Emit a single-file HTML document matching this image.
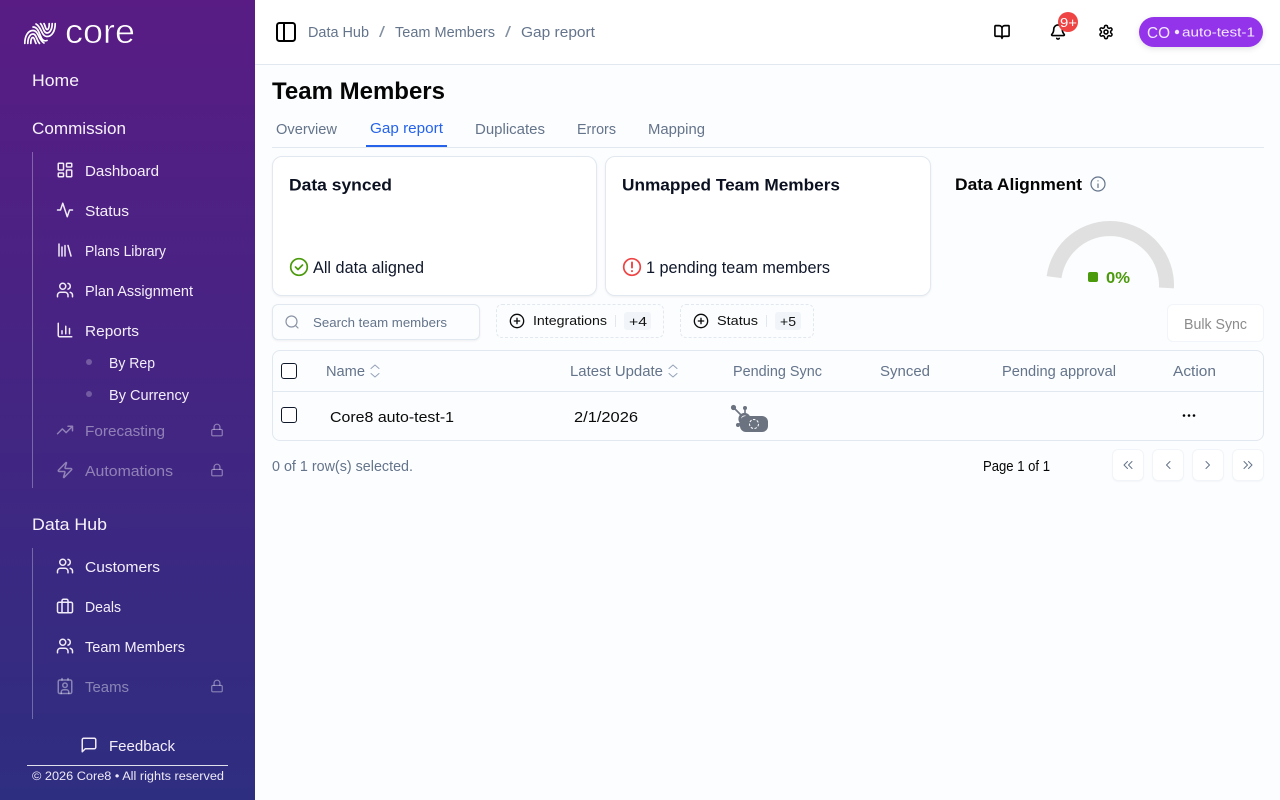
<!DOCTYPE html>
<html lang="en">
<head>
<meta charset="utf-8">
<title>Team Members - Gap report</title>
<style>
html,body{margin:0;padding:0;width:1280px;height:800px;overflow:hidden;background:#fcfdfe;font-family:"Liberation Sans",sans-serif}
.box{position:absolute;box-sizing:border-box}
#side{left:0;top:0;width:255px;height:800px;background:linear-gradient(180deg,#591c85 0%,#2e2e80 100%)}
#head{left:255px;top:0;width:1025px;height:65px;background:#fff;border-bottom:1px solid #e2e8f0}
.card{background:#fff;border:1px solid #e2e8f0;border-radius:10px;box-shadow:0 1px 2px rgba(15,23,42,.06)}
.chip{border:1px dashed #e2e8f0;border-radius:6px}
.badge{background:#f1f5f9;border-radius:3px}
.pg{width:32px;height:32px;top:449px;border:1px solid #f1f5f9;border-radius:6px;background:#fff;box-shadow:0 1px 1px rgba(15,23,42,.03)}
.cb{left:281px;width:16px;height:16px;border:1px solid #0f172a;border-radius:3px;background:#fff}
svg#o{position:absolute;left:0;top:0}
text{font-family:"Liberation Sans",sans-serif}
.i{fill:none;stroke:currentColor;stroke-width:2;stroke-linecap:round;stroke-linejoin:round}
.n{fill:#f4eef9;font-size:14.5px}
.nd{fill:#fff;fill-opacity:.42;font-size:14.5px}
.h{fill:#f7f2fb;font-size:17px}
.g{fill:#64748b;font-size:14.5px}
.t{fill:#0b1120;font-size:17px;font-weight:bold}
</style>
</head>
<body>
<div class="box" id="side"></div>
<div class="box" id="head"></div>
<div class="box card" style="left:272px;top:156px;width:325px;height:140px"></div>
<div class="box card" style="left:605px;top:156px;width:326px;height:140px"></div>
<div class="box" style="left:272px;top:304px;width:208px;height:36px;border:1px solid #e2e8f0;border-radius:6px;background:#fcfdfe;box-shadow:0 1px 2px rgba(15,23,42,.06)"></div>
<div class="box chip" style="left:496px;top:304px;width:168px;height:34px"></div>
<div class="box badge" style="left:624px;top:312px;width:27px;height:18px"></div>
<div class="box" style="left:615px;top:315px;width:1px;height:12px;background:#e2e8f0"></div>
<div class="box chip" style="left:680px;top:304px;width:134px;height:34px"></div>
<div class="box badge" style="left:775px;top:312px;width:26px;height:18px"></div>
<div class="box" style="left:766px;top:315px;width:1px;height:12px;background:#e2e8f0"></div>
<div class="box" style="left:1167px;top:304px;width:97px;height:38px;border:1px solid #f1f5f9;border-radius:6px;background:#fff"></div>
<div class="box" style="left:272px;top:350px;width:992px;height:91px;border:1px solid #e2e8f0;border-radius:8px"></div>
<div class="box" style="left:273px;top:391px;width:990px;height:1px;background:#e2e8f0"></div>
<div class="box cb" style="top:363px"></div>
<div class="box cb" style="top:407px"></div>
<div class="box pg" style="left:1112px"></div>
<div class="box pg" style="left:1152px"></div>
<div class="box pg" style="left:1192px"></div>
<div class="box pg" style="left:1232px"></div>

<svg id="o" width="1280" height="800" viewBox="0 0 1280 800" xmlns="http://www.w3.org/2000/svg">
<defs>
<symbol id="dash" viewBox="0 0 24 24"><rect x="3" y="3" width="7" height="9" rx="1"/><rect x="14" y="3" width="7" height="5" rx="1"/><rect x="14" y="12" width="7" height="9" rx="1"/><rect x="3" y="16" width="7" height="5" rx="1"/></symbol>
<symbol id="act" viewBox="0 0 24 24"><path d="M22 12h-4l-3 9L9 3l-3 9H2"/></symbol>
<symbol id="lib" viewBox="0 0 24 24"><path d="m16 6 4 14M12 6v14M8 8v12M4 4v16"/></symbol>
<symbol id="usr" viewBox="0 0 24 24"><path d="M16 21v-2a4 4 0 0 0-4-4H6a4 4 0 0 0-4 4v2"/><circle cx="9" cy="7" r="4"/><path d="M22 21v-2a4 4 0 0 0-3-3.87M16 3.13a4 4 0 0 1 0 7.75"/></symbol>
<symbol id="bar" viewBox="0 0 24 24"><path d="M3 3v16a2 2 0 0 0 2 2h16M8 17v-4M13 17V7M18 17V10"/></symbol>
<symbol id="trd" viewBox="0 0 24 24"><path d="M22 7l-8.500 8.500-5-5L2 17M16 7h6v6"/></symbol>
<symbol id="zap" viewBox="0 0 24 24"><path d="M4 14a1 1 0 0 1-.78-1.630l9.900-10.200a.5.5 0 0 1 .86.46l-1.920 6.020A1 1 0 0 0 13 10h7a1 1 0 0 1 .78 1.630l-9.900 10.200a.5.5 0 0 1-.86-.46l1.920-6.020A1 1 0 0 0 11 14z"/></symbol>
<symbol id="lck" viewBox="0 0 24 24"><rect x="3" y="11" width="18" height="11" rx="2"/><path d="M7 11V7a5 5 0 0 1 10 0v4"/></symbol>
<symbol id="bag" viewBox="0 0 24 24"><rect x="2" y="7" width="20" height="14" rx="2"/><path d="M16 21V5a2 2 0 0 0-2-2h-4a2 2 0 0 0-2 2v16"/></symbol>
<symbol id="ctc" viewBox="0 0 24 24"><path d="M16 2v2M8 2v2"/><rect x="3" y="4" width="18" height="18" rx="2"/><circle cx="12" cy="11" r="3"/><path d="M7 22v-2a3 3 0 0 1 3-3h4a3 3 0 0 1 3 3v2"/></symbol>
<symbol id="msg" viewBox="0 0 24 24"><path d="M21 15a2 2 0 0 1-2 2H7l-4 4V5a2 2 0 0 1 2-2h14a2 2 0 0 1 2 2z"/></symbol>
<symbol id="book" viewBox="0 0 24 24"><path d="M12 7v14M3 18a1 1 0 0 1-1-1V4a1 1 0 0 1 1-1h5a4 4 0 0 1 4 4 4 4 0 0 1 4-4h5a1 1 0 0 1 1 1v13a1 1 0 0 1-1 1h-6a3 3 0 0 0-3 3 3 3 0 0 0-3-3z"/></symbol>
<symbol id="bell" viewBox="0 0 24 24"><path d="M10.268 21a2 2 0 0 0 3.464 0M3.262 15.326A1 1 0 0 0 4 17h16a1 1 0 0 0 .74-1.673C19.410 13.956 18 12.499 18 8A6 6 0 0 0 6 8c0 4.499-1.411 5.956-2.738 7.326"/></symbol>
<symbol id="gear" viewBox="0 0 24 24"><path d="M12.220 2h-.44a2 2 0 0 0-2 2v.18a2 2 0 0 1-1 1.730l-.43.25a2 2 0 0 1-2 0l-.15-.08a2 2 0 0 0-2.730.73l-.22.38a2 2 0 0 0 .73 2.730l.15.1a2 2 0 0 1 1 1.720v.51a2 2 0 0 1-1 1.740l-.15.09a2 2 0 0 0-.73 2.730l.22.38a2 2 0 0 0 2.730.73l.15-.08a2 2 0 0 1 2 0l.43.25a2 2 0 0 1 1 1.730V20a2 2 0 0 0 2 2h.44a2 2 0 0 0 2-2v-.18a2 2 0 0 1 1-1.730l.43-.25a2 2 0 0 1 2 0l.15.08a2 2 0 0 0 2.730-.73l.22-.39a2 2 0 0 0-.73-2.730l-.15-.08a2 2 0 0 1-1-1.740v-.5a2 2 0 0 1 1-1.740l.15-.09a2 2 0 0 0 .73-2.730l-.22-.38a2 2 0 0 0-2.730-.73l-.15.08a2 2 0 0 1-2 0l-.43-.25a2 2 0 0 1-1-1.730V4a2 2 0 0 0-2-2z"/><circle cx="12" cy="12" r="3"/></symbol>
<symbol id="plus" viewBox="0 0 24 24"><circle cx="12" cy="12" r="10"/><path d="M8 12h8M12 8v8"/></symbol>
</defs>

<!-- logo -->
<g fill="none" stroke="#fff" stroke-width="1.700" stroke-linecap="round">
<path d="M24.800 43.400C24.800 36 28 30.500 33 30.500C38.500 30.500 38.500 40 44 43"/>
<path d="M27.800 43.400C27.800 38 30 34 33 34C36.500 34 36.500 40 39.500 43.400"/>
<path d="M30.800 43.400C30.800 40 31.500 37.500 33 37.500C34.500 37.500 34.500 41 36 43.400"/>
<path d="M33 27C38 27 39 33 41 37C42 40 44 41.500 47 40.500"/>
<g transform="rotate(180 40 33.500)">
<path d="M24.800 43.400C24.800 36 28 30.500 33 30.500C38.500 30.500 38.500 40 44 43"/>
<path d="M27.800 43.400C27.800 38 30 34 33 34C36.500 34 36.500 40 39.500 43.400"/>
<path d="M30.800 43.400C30.800 40 31.500 37.500 33 37.500C34.500 37.500 34.500 41 36 43.400"/>
</g>
</g>
<text x="65" y="43" font-size="34" fill="#fff" stroke="#581c84" stroke-width=".6" textLength="70" lengthAdjust="spacingAndGlyphs">core</text>

<!-- side nav -->
<text class="h" x="32" y="86" textLength="47" lengthAdjust="spacingAndGlyphs">Home</text>
<text class="h" x="32" y="134" textLength="94" lengthAdjust="spacingAndGlyphs">Commission</text>
<text class="h" x="32" y="530" textLength="75" lengthAdjust="spacingAndGlyphs">Data Hub</text>
<path d="M32.500 152V488M32.500 548V719" stroke="#fff" stroke-opacity=".3"/>

<g class="i" style="color:#f1eaf7">
<use href="#dash" x="56" y="161" width="18" height="18"/>
<use href="#act" x="56" y="201" width="18" height="18"/>
<use href="#lib" x="56" y="241" width="18" height="18"/>
<use href="#usr" x="56" y="281" width="18" height="18"/>
<use href="#bar" x="56" y="321" width="18" height="18"/>
<use href="#usr" x="56" y="557" width="18" height="18"/>
<use href="#bag" x="56" y="597" width="18" height="18"/>
<use href="#usr" x="56" y="637" width="18" height="18"/>
<use href="#msg" x="80" y="736" width="18" height="18"/>
</g>
<g class="i" style="color:rgba(255,255,255,.42)">
<use href="#trd" x="56" y="421" width="18" height="18"/>
<use href="#zap" x="56" y="461" width="18" height="18"/>
<use href="#ctc" x="56" y="677" width="18" height="18"/>
<use href="#lck" x="210" y="423" width="14" height="14"/>
<use href="#lck" x="210" y="463" width="14" height="14"/>
<use href="#lck" x="210" y="679" width="14" height="14"/>
</g>

<text class="n" x="85" y="176" textLength="74" lengthAdjust="spacingAndGlyphs">Dashboard</text>
<text class="n" x="85" y="216" textLength="44" lengthAdjust="spacingAndGlyphs">Status</text>
<text class="n" x="85" y="256" textLength="81" lengthAdjust="spacingAndGlyphs">Plans Library</text>
<text class="n" x="85" y="296" textLength="108" lengthAdjust="spacingAndGlyphs">Plan Assignment</text>
<text class="n" x="85" y="336" textLength="54" lengthAdjust="spacingAndGlyphs">Reports</text>
<circle cx="89" cy="362" r="3" fill="#fff" fill-opacity=".25"/>
<circle cx="89" cy="394" r="3" fill="#fff" fill-opacity=".25"/>
<text class="n" x="109" y="368" textLength="46" lengthAdjust="spacingAndGlyphs">By Rep</text>
<text class="n" x="109" y="400" textLength="80" lengthAdjust="spacingAndGlyphs">By Currency</text>
<text class="nd" x="85" y="436" textLength="80" lengthAdjust="spacingAndGlyphs">Forecasting</text>
<text class="nd" x="85" y="476" textLength="88" lengthAdjust="spacingAndGlyphs">Automations</text>
<text class="n" x="85" y="572" textLength="75" lengthAdjust="spacingAndGlyphs">Customers</text>
<text class="n" x="85" y="612" textLength="36" lengthAdjust="spacingAndGlyphs">Deals</text>
<text class="n" x="85" y="652" textLength="100" lengthAdjust="spacingAndGlyphs">Team Members</text>
<text class="nd" x="85" y="692" textLength="44" lengthAdjust="spacingAndGlyphs">Teams</text>
<text class="n" x="109" y="751" textLength="66" lengthAdjust="spacingAndGlyphs">Feedback</text>
<rect x="27" y="765" width="201" height="1" fill="#fff" fill-opacity=".85"/>
<text x="32" y="780" font-size="11.500" fill="#efe9f7" textLength="192" lengthAdjust="spacingAndGlyphs">© 2026  Core8 • All rights reserved</text>

<!-- header -->
<rect x="277" y="23" width="18" height="18" rx="2.500" fill="none" stroke="#000" stroke-width="2"/>
<path d="M284 23v18" stroke="#000" stroke-width="2"/>
<text class="g" x="308" y="37" textLength="61" lengthAdjust="spacingAndGlyphs">Data Hub</text>
<text class="g" x="379" y="37" fill-opacity=".8" textLength="6" lengthAdjust="spacingAndGlyphs">/</text>
<text class="g" x="395" y="37" textLength="100" lengthAdjust="spacingAndGlyphs">Team Members</text>
<text class="g" x="505" y="37" fill-opacity=".8" textLength="6" lengthAdjust="spacingAndGlyphs">/</text>
<text class="g" x="521" y="37" textLength="74" lengthAdjust="spacingAndGlyphs">Gap report</text>

<g class="i" style="color:#000;stroke-width:2.300">
<use href="#book" x="993.500" y="23.500" width="17" height="17"/>
<use href="#bell" x="1049.500" y="23.500" width="17" height="17"/>
<use href="#gear" x="1098" y="24" width="16" height="16"/>
</g>
<circle cx="1068" cy="22" r="10" fill="#ef4444"/>
<text x="1060" y="27" font-size="12.500" fill="#fff" textLength="17" lengthAdjust="spacingAndGlyphs">9+</text>
<rect x="1139" y="17" width="124" height="30" rx="15" fill="#9333ea" style="filter:drop-shadow(0 2px 3px rgba(15,23,42,.12))"/>
<text x="1147" y="38" font-size="16" fill="#f3e8ff" textLength="23" lengthAdjust="spacingAndGlyphs">CO</text>
<circle cx="1177" cy="32" r="2.200" fill="#f3e8ff"/>
<text x="1182" y="36.500" font-size="12.500" fill="#f3e8ff" textLength="73" lengthAdjust="spacingAndGlyphs">auto-test-1</text>

<!-- title & tabs -->
<text x="272" y="99" font-size="24" font-weight="bold" fill="#050505" textLength="173" lengthAdjust="spacingAndGlyphs">Team Members</text>
<text class="g" x="276" y="134" textLength="61" lengthAdjust="spacingAndGlyphs">Overview</text>
<text x="370" y="133" font-size="14.500" fill="#2563eb" textLength="73" lengthAdjust="spacingAndGlyphs">Gap report</text>
<text class="g" x="475" y="134" textLength="70" lengthAdjust="spacingAndGlyphs">Duplicates</text>
<text class="g" x="577" y="134" textLength="39" lengthAdjust="spacingAndGlyphs">Errors</text>
<text class="g" x="648" y="134" textLength="57" lengthAdjust="spacingAndGlyphs">Mapping</text>
<rect x="272" y="147" width="992" height="1" fill="#e2e8f0"/>
<rect x="366" y="145" width="81" height="2" fill="#2563eb"/>

<!-- cards -->
<text class="t" x="289" y="190.500" textLength="103" lengthAdjust="spacingAndGlyphs">Data synced</text>
<text class="t" x="622" y="190.500" textLength="218" lengthAdjust="spacingAndGlyphs">Unmapped Team Members</text>
<g fill="none" stroke-linecap="round" stroke-linejoin="round">
<circle cx="299" cy="267" r="8.300" stroke="#4b9a0c" stroke-width="1.700"/>
<path d="M295.500 267l2.500 2.500 4.500-4.500" stroke="#4b9a0c" stroke-width="1.700"/>
<circle cx="632" cy="267" r="8.300" stroke="#ef4444" stroke-width="1.700"/>
<path d="M632 262.500v5M632 271v.2" stroke="#ef4444" stroke-width="1.900"/>
</g>
<text x="313" y="273" font-size="17" fill="#0f172a" textLength="111" lengthAdjust="spacingAndGlyphs">All data aligned</text>
<text x="646" y="273" font-size="17" fill="#0f172a" textLength="184" lengthAdjust="spacingAndGlyphs">1 pending team members</text>

<text x="955" y="190" font-size="17" font-weight="bold" fill="#050505" textLength="127" lengthAdjust="spacingAndGlyphs">Data Alignment</text>
<g fill="none" stroke="#64748b" stroke-width="1.200" stroke-linecap="round">
<circle cx="1098" cy="184" r="7"/>
<path d="M1098 184v3.500M1098 180.800v.1"/>
</g>
<path d="M1046.620 276.090A64 64 0 0 1 1173.910 288.350L1158.930 287.560A49 49 0 0 0 1061.480 278.180Z" fill="#e0e0e0"/>
<rect x="1088" y="272" width="10" height="10" rx="2" fill="#4b9a0c"/>
<text x="1106" y="283" font-size="15.500" font-weight="bold" fill="#4b9a0c" textLength="24" lengthAdjust="spacingAndGlyphs">0%</text>

<!-- filters -->
<g fill="none" stroke="#8b94a5" stroke-width="1.200" stroke-linecap="round">
<circle cx="291.500" cy="321.500" r="5.500"/>
<path d="M295.500 325.500l2.500 2.500"/>
</g>
<text x="313" y="327" font-size="13" fill="#64748b" textLength="134" lengthAdjust="spacingAndGlyphs">Search team members</text>
<g class="i" style="color:#0a0a0a">
<use href="#plus" x="509" y="313" width="16" height="16"/>
<use href="#plus" x="693" y="313" width="16" height="16"/>
</g>
<text x="533" y="325" font-size="12.500" fill="#111" textLength="74" lengthAdjust="spacingAndGlyphs">Integrations</text>
<text x="629" y="326" font-size="13" fill="#111" textLength="18" lengthAdjust="spacingAndGlyphs">+4</text>
<text x="717" y="325" font-size="12.500" fill="#111" textLength="41" lengthAdjust="spacingAndGlyphs">Status</text>
<text x="780" y="326" font-size="13" fill="#111" textLength="16" lengthAdjust="spacingAndGlyphs">+5</text>
<text x="1184" y="329" font-size="14.500" fill="#8b8b8b" textLength="63" lengthAdjust="spacingAndGlyphs">Bulk Sync</text>

<!-- table -->
<text class="g" x="326" y="376" textLength="39" lengthAdjust="spacingAndGlyphs">Name</text>
<text class="g" x="570" y="376" textLength="93" lengthAdjust="spacingAndGlyphs">Latest Update</text>
<text class="g" x="733" y="376" textLength="89" lengthAdjust="spacingAndGlyphs">Pending Sync</text>
<text class="g" x="880" y="376" textLength="50" lengthAdjust="spacingAndGlyphs">Synced</text>
<text class="g" x="1002" y="376" textLength="114" lengthAdjust="spacingAndGlyphs">Pending approval</text>
<text class="g" x="1173" y="376" textLength="43" lengthAdjust="spacingAndGlyphs">Action</text>
<g fill="none" stroke="#94a3b8" stroke-width="1" stroke-linecap="round" stroke-linejoin="round">
<path d="M371 368.500l4-3.500 4 3.500M371 373.500l4 3.500 4-3.500"/>
<path d="M669 368.500l4-3.500 4 3.500M669 373.500l4 3.500 4-3.500"/>
</g>
<text x="330" y="422" font-size="14.500" fill="#0a0a0a" textLength="124" lengthAdjust="spacingAndGlyphs">Core8 auto-test-1</text>
<text x="574" y="422" font-size="14.500" fill="#0a0a0a" textLength="64" lengthAdjust="spacingAndGlyphs">2/1/2026</text>

<!-- hubspot + unlink -->
<g fill="#6b7280" stroke="#6b7280">
<circle cx="733.500" cy="407.500" r="2.600" stroke="none"/>
<circle cx="745" cy="408" r="2" stroke="none"/>
<circle cx="738" cy="425" r="2" stroke="none"/>
<path d="M734 408l7 7M745 408v6M738.500 425l3-3" stroke-width="1.600" fill="none"/>
<circle cx="744.500" cy="419" r="4.800" fill="none" stroke-width="2.600"/>
</g>
<rect x="740" y="416" width="28" height="16" rx="6" fill="#6b7280"/>
<circle cx="754" cy="424" r="4.500" fill="none" stroke="#fff" stroke-width="1" stroke-dasharray="2.500 1.500"/>

<g fill="#000"><circle cx="1184" cy="415.500" r="1.300"/><circle cx="1189" cy="415.500" r="1.300"/><circle cx="1194" cy="415.500" r="1.300"/></g>

<!-- footer -->
<text x="272" y="471" font-size="14.500" fill="#64748b" textLength="141" lengthAdjust="spacingAndGlyphs">0 of 1 row(s) selected.</text>
<text x="983" y="471" font-size="14.500" fill="#050505" textLength="67" lengthAdjust="spacingAndGlyphs">Page 1 of 1</text>
<g fill="none" stroke="#64748b" stroke-width="1" stroke-linecap="round" stroke-linejoin="round">
<path d="M1127.500 461.500l-3.500 3.500 3.500 3.500M1132 461.500l-3.500 3.500 3.500 3.500"/>
<path d="M1170 461.500l-3.500 3.500 3.500 3.500"/>
<path d="M1206 461.500l3.500 3.500-3.500 3.500"/>
<path d="M1244 461.500l3.500 3.500-3.500 3.500M1248.500 461.500l3.500 3.500-3.500 3.500"/>
</g>
</svg>
</body>
</html>
